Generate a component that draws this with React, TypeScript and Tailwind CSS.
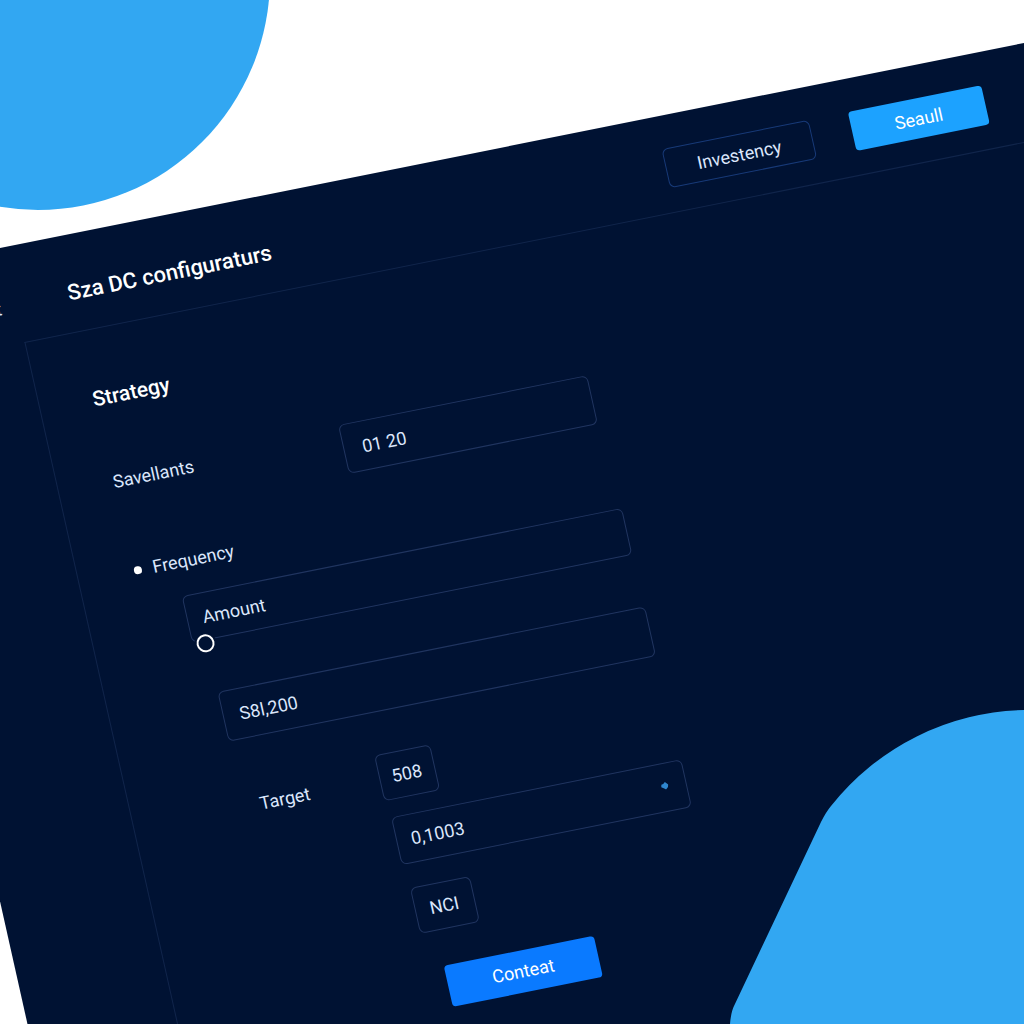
import type { InputHTMLAttributes } from "react";

const fieldStyle =
  "block rounded-md border border-[#203560] bg-transparent text-[18px] leading-6 text-[#dbe6fb] outline-none";

function Field({ className, ...rest }: InputHTMLAttributes<HTMLInputElement> & { className: string }) {
  return <input type="text" {...rest} className={`${fieldStyle} ${className}`} />;
}

function Header() {
  return (
    <header className="flex h-[97px] items-start pt-[33px] pr-[93px]">
      <div className="flex h-[52px] w-[199px] shrink-0 items-center pl-[125px] text-[18px] text-[#dbe6fb]">t</div>
      <h1 className="mt-1 flex h-10 items-center text-[22px] font-medium whitespace-nowrap text-white">
        Sza DC configuraturs
      </h1>
      <div className="ml-auto flex gap-10">
        <button
          type="button"
          className="h-10 w-[150px] rounded-md border border-[#173a78] text-[18px] text-[#dbe6fb]"
        >
          Investency
        </button>
        <button type="button" className="h-10 w-[136px] rounded bg-[#1ca2ff] text-[18px] text-white">
          Seaull
        </button>
      </div>
    </header>
  );
}

function StrategyForm() {
  return (
    <form className="w-[552px] pt-[55px] pl-[53px] text-[18px] leading-6 text-[#dbe6fb]">
      <h2 className="text-[21px] leading-7 font-medium text-white">Strategy</h2>

      <div className="mt-[59px] flex items-start pl-[2px]">
        <label htmlFor="savellants" className="w-[232px]">
          Savellants
        </label>
        <Field id="savellants" defaultValue="01 20" className="h-[50px] w-[254px] px-[18px]" />
      </div>

      <label htmlFor="frequency" className="mt-[41px] flex items-center gap-[11px] pl-[3px]">
        <span className="size-2 rounded-full bg-white" />
        Frequency
      </label>

      <div className="relative mt-[22px] ml-[44px]">
        <Field id="frequency" defaultValue="Amount" className="h-12 w-[449px] px-[15px]" />
        <input
          type="radio"
          aria-label="Amount"
          className="absolute -bottom-3 left-1 size-[18px] appearance-none rounded-full border-2 border-white bg-[#001233] shadow-[0_0_0_2px_#001233]"
        />
      </div>

      <div className="mt-[53px] ml-[58px]">
        <Field aria-label="Amount value" defaultValue="S8l,200" className="h-[51px] w-[436px] px-[16px]" />
      </div>

      <div className="mt-[42px] flex items-start pl-[75px]">
        <label htmlFor="target" className="mt-[13px] w-[122px]">
          Target
        </label>
        <div>
          <Field id="target" defaultValue="508" className="h-[47px] w-[57px] px-3" />
          <div className="relative mt-[17px] ml-[3px]">
            <Field aria-label="Target amount" defaultValue="0,1003" className="h-[49px] w-[296px] px-[14px]" />
            <svg viewBox="0 0 8 8" className="absolute top-[19px] right-[18px] size-2" aria-hidden="true">
              <path d="M5 0.2 L7.8 3.2 L7 5.6 L4.6 7.8 L3 6.4 L0.4 4.6 L1 2.2 L3 1.8 Z" fill="#2f86cf" />
            </svg>
          </div>
          <Field aria-label="Target code" defaultValue="NCI" className="mt-[24px] ml-[6px] h-[47px] w-[61px] px-[14px]" />
          <button
            type="button"
            className="mt-9 ml-[22px] h-[42px] w-[153px] rounded bg-[#0a7aff] text-[18px] text-white"
          >
            Conteat
          </button>
        </div>
      </div>
    </form>
  );
}

export default function App() {
  return (
    <div className="relative h-screen overflow-hidden bg-white font-['Roboto','Inter',sans-serif]">
      <div className="absolute -top-[254px] -left-[194px] size-[464px] rounded-full bg-[#32a7f2]" />

      <div className="flow-root">
        <div className="mt-[276px] -ml-[140px] flex min-h-[110vh] w-[120vw] origin-top-left -rotate-[11.32deg] skew-x-[1.3deg] flex-col bg-[#001233]">
          <Header />
          <div className="flex flex-1">
            <aside className="w-[146px] shrink-0" />
            <main className="flex-1 border-t border-l border-[#10254b]">
              <StrategyForm />
            </main>
          </div>
        </div>
      </div>

      <svg viewBox="0 0 294 314" className="absolute right-0 bottom-0 h-[314px] w-[294px]" aria-hidden="true">
        <path d="M294 0 A253 253 0 0 0 101 96 Q96 102 91 112 L4 296 Q1 302 0 314 L294 314 Z" fill="#32a7f2" />
      </svg>
    </div>
  );
}
